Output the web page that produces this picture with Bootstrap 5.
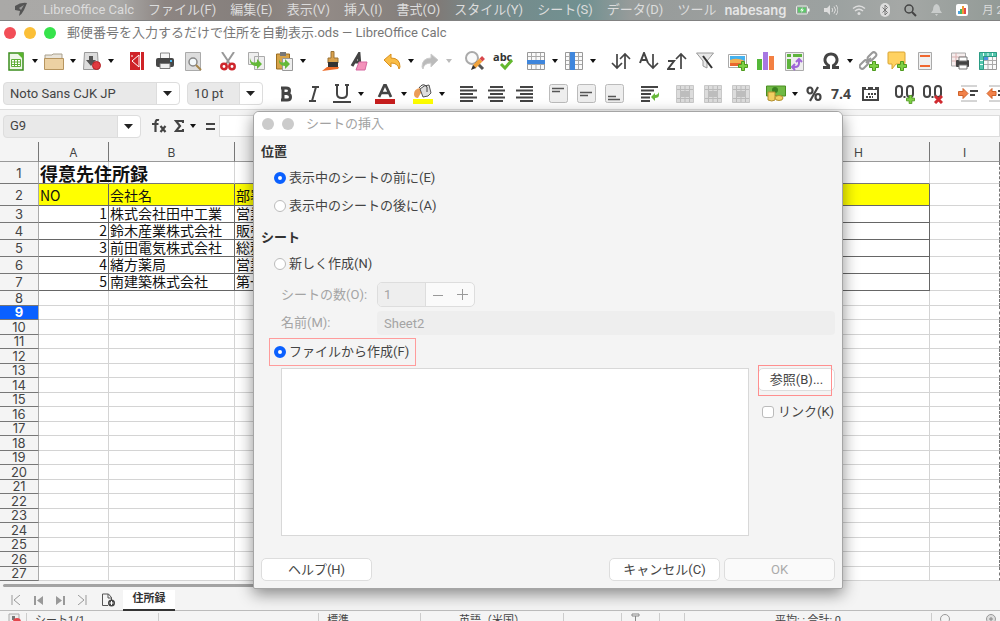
<!DOCTYPE html>
<html lang="ja">
<head>
<meta charset="utf-8">
<meta name="viewport" content="width=device-width, initial-scale=1">
<title>郵便番号を入力するだけで住所を自動表示.ods — LibreOffice Calc</title>
<link href="https://cdn.jsdelivr.net/npm/bootstrap@5.3.0/dist/css/bootstrap.min.css" rel="stylesheet">
<style>
body{font:13px/18px Roboto,"Noto Sans CJK JP",sans-serif;color:#444;background:#fff;height:100vh}
a{color:inherit;text-decoration:none}
button{border:0;background:none;padding:0;color:inherit}
svg{display:block;flex:none}
.menubar{height:21px;gap:14px;padding-left:13px;color:#dcdcdc;border-bottom:1px solid #818181;background:linear-gradient(90deg,#aaa9a7 0,#a9a8a6 120px,#8d8582 165px,#857f7c 250px,#938b87 320px,#7f7b78 440px,#76898a 480px,#719191 585px,#969b9a 630px,#9ea09f 760px,#9ba1a0 830px,#a5a8a6 900px,#939b97 100%)}
.menubar .user{font-family:Inter,sans-serif;font-weight:600;color:#e6e6e6;margin-left:-6px}
.tray{gap:14px;margin-left:-4px}
.titlebar{height:23px;color:#777;padding-left:4px}
.titlebar .doc{margin-left:11px}
.dot{width:12px;height:12px;border-radius:50%}
.tools{height:34px;padding-left:2px;overflow:hidden}
.tools.format{height:32px;padding-left:3px;border-bottom:1px solid #ddd}
.ic{width:28px;height:26px;flex:none;display:flex;align-items:center;justify-content:center}
.car{width:10px;height:26px;flex:none;display:flex;align-items:center;justify-content:center}
.car::after{content:"";border:3px solid transparent;border-top:4px solid #111;border-bottom:0}
.car.dim::after{border-top-color:#bbb}
.s5{width:5px;flex:none}.s7{width:7px;flex:none}.s9{width:9px;flex:none}
.combo{appearance:none;height:23px;border:1px solid #ddd;border-radius:4px;color:#444;padding:0 26px 0 6px;
background:url("data:image/svg+xml,%3Csvg xmlns='http://www.w3.org/2000/svg' width='23' height='21'%3E%3Cpath fill='%23fff' stroke='none' d='M1 0h22v21H1z'/%3E%3Cpath fill='%23ddd' d='M0 0h1v21H0z'/%3E%3Cpath fill='%23222' d='M7 8h9l-4.500 5z'/%3E%3C/svg%3E") right top no-repeat #e9e9e9}
.c-font{width:177px}.c-size{width:76px}.c-cell{width:138px;margin-left:3px}
.formula{height:32px;background:#f4f4f4;color:#444}
.formula .line{height:22px;border:1px solid #ddd;background:#fff;outline:0}
.sheet{min-height:0;background:#f4f4f4}
.grid{table-layout:fixed;width:1000px;border-collapse:separate;border-spacing:0;line-height:14px}
.grid th,.grid td{padding:0;overflow:hidden;white-space:nowrap}
.grid th{font-weight:400;font-family:Inter,sans-serif;text-align:center;background:#f4f4f4;color:#444}
.grid thead th{height:20px;line-height:17px;padding-top:2px;font-size:12px;border-bottom:1px solid #999;border-right:1px solid #777}
.grid tbody th{border-right:1px solid #aaa;border-bottom:1px solid #777}
.grid td{background:#fff;border-right:1px solid #d4d4d4;border-bottom:1px solid #d4d4d4;color:#111;font:14px/14px "Noto Sans CJK JP",sans-serif;padding:0 1px}
.grid tr>td:last-child{border-right:1px dashed #777}
.grid tbody tr{height:15px}
.grid tbody tr.even{height:14px}
.grid tbody tr.even th{line-height:13px}
.grid tbody tr.r1{height:22px}.grid tbody tr.r2{height:22px}
.grid tr.r1 td{font-size:18px;line-height:20px;font-weight:700;overflow:visible;border-bottom-color:#777}
.grid tr.r1 td:last-child{border-bottom-color:#d4d4d4}
.grid tr.rec{height:17px}
.grid tr.rec th{line-height:16px}
.grid tr.rec td{line-height:14px;vertical-align:top}
.grid tr.r2 td,.grid tr.rec td{border-bottom-color:#666;border-right-color:#666}
.grid tr.r2 td{background:#ff0}
.grid tr.r2 td:last-child,.grid tr.rec td:last-child{background:#fff;border-bottom-color:#d4d4d4;border-right-color:#777}
.grid tbody th.cur{background:#0a60ff;color:#fff;font-weight:700}
.tabs{height:30px;background:#f4f4f4;border-bottom:1px solid #bbb;padding:3px 3px 0}
.thumb{height:3px;width:60%;background:#a3a3a3;border-radius:2px}
.tabs nav{height:22px;margin-top:2px;padding-left:2px}
.tabs button{width:22px;display:flex;justify-content:center}
.tabs .addtab{width:30px}
.sheettab{width:52px;height:21px;background:#fff;border-bottom:2px solid #333;font-size:11px;font-weight:600;text-align:center;color:#333}
.status{height:10px;flex:none;overflow:hidden;font-size:11px;line-height:20px;background:#f4f4f4}
.status>div{height:20px;border-right:1px solid #ccc;margin-top:2px;line-height:16px}
.dlg{left:253px;top:111px;width:590px;border:1px solid #a5a5a5;border-radius:6px 6px 2px 2px;background:#f4f4f4;box-shadow:0 5px 16px rgba(0,0,0,.45);z-index:5;overflow:hidden}
.dlg header{height:24px;background:#fff;color:#a2a2a2;padding-left:8px;gap:8px}
.dlg header .dot{background:#cbcbcb}
.dlg form{padding:7px 7px 7px}
.dlg h2{font-size:13px;line-height:18px;font-weight:600;margin:0 0 3px;color:#333}
.dlg h2.next{margin-top:9px}
.opt{height:28px;padding-left:13px;gap:3px}
.opt input,.chk input{appearance:none;width:12px;height:12px;border:1px solid #bbb;background:#fff;border-radius:50%;margin:0;flex:none}
.opt input:checked{border:4px solid #0a60ff}
.chk{margin-top:12px}
.chk input{border-radius:3px}
.red{border:1px solid #ff9c9c;margin:3px 0 2px 8px;padding:0 9px 0 4px;width:147px}
.fld{padding-left:20px;margin-top:4px;color:#a4a4a4}
.fld label{width:96px}
.spin{height:25px;border:1px solid #ddd;border-radius:5px;background:#fafafa;overflow:hidden}
.spin input{width:48px;border:0;border-right:1px solid #ddd;background:#eee;color:#a4a4a4;padding:0 6px}
.spin button{width:24px;height:23px;display:flex;justify-content:center;align-items:center}
.nm{height:24px;border:0;border-radius:4px;background:#eee;color:#a4a4a4;padding:0 7px}
.files{height:168px;margin-left:20px;border:1px solid #d8d8d8;background:#fff}
.pb{height:23px;width:111px;border:1px solid #ddd;border-radius:5px;background:#fff;color:#444;line-height:20px}
.pb:disabled{background:#fafafa;color:#aaa}
.foot{margin-top:22px}
.side{width:77px;margin-left:9px}
.mark-box{left:0;top:-3px;width:74px;height:31px;border:1px solid #ff8f8f;pointer-events:none}
</style>
</head>
<body class="d-flex flex-column overflow-hidden position-relative">
<svg width="0" height="0" class="position-absolute"><defs>
<symbol id="plus" viewBox="0 0 10 10"><path d="M3.500.5h3v3h3v3h-3v3h-3v-3h-3v-3h3z" fill="#7ed044" stroke="#4e9a1e"/></symbol>
<symbol id="cells" viewBox="0 0 18 18"><path fill="#fafafa" stroke="#999" d="M.5.5h17v17H.5z"/><path stroke="#aaa" d="M1 4.500h16M1 8.500h16M1 12.500h16M4.500 1v16M9 1v16M13.500 1v16"/></symbol>
<symbol id="merge" viewBox="0 0 18 18"><path fill="#dcdcdc" stroke="#c9c9c9" d="M.5.5h17v17H.5z"/><path stroke="#bbb" d="M1 4.500h16M1 13.500h16M4.500 1v16M9 1v16M13.500 1v16"/><path fill="#bdbdbd" d="M4 6h10v6H4z"/></symbol>
<symbol id="vbox" viewBox="0 0 20 20"><rect x=".5" y=".5" width="18" height="18" rx="2" fill="#eee" stroke="#bbb"/></symbol>
</defs></svg>

<nav class="menubar d-flex align-items-center text-nowrap flex-shrink-0 overflow-hidden" aria-label="メニューバー">
<svg width="16" height="16" viewBox="0 0 16 16"><path d="M2 4q6-4 12-3l-3 7q-2 4-5 6l1-5-5-1z" fill="#555"/><path d="M6 6l5-3-3 5z" fill="#999"/></svg>
<a href="#">LibreOffice Calc</a><a href="#">ファイル(F)</a><a href="#">編集(E)</a><a href="#">表示(V)</a><a href="#">挿入(I)</a><a href="#">書式(O)</a><a href="#">スタイル(Y)</a><a href="#">シート(S)</a><a href="#">データ(D)</a><a href="#">ツール</a>
<span class="user">nabesang</span>
<div class="tray d-flex align-items-center">
<svg width="14" height="12" viewBox="0 0 14 12"><rect x=".5" y="2" width="11" height="8" rx="1" fill="none" stroke="#e5eee5"/><path fill="#5fc66b" d="M2 3.500h8v5H2z"/><path fill="#fff" d="M7 3L4 6.500h2L5 9l3-3.500H6zM12 4.500h1.500v3H12z"/></svg>
<svg width="14" height="12" viewBox="0 0 14 12"><path fill="#ddd" d="M0 4h3l3-3v10L3 8H0z"/><path fill="none" stroke="#ddd" d="M8 4q1.500 2 0 4M10 2.500q3 3.500 0 7M12 1q4 5 0 10"/></svg>
<svg width="14" height="12" viewBox="0 0 14 12"><path fill="none" stroke="#ddd" stroke-width="1.500" d="M1 4.500q6-5 12 0M3 7q4-3.500 8 0"/><circle cx="7" cy="9.500" r="1.500" fill="#ddd"/></svg>
<svg width="10" height="14" viewBox="0 0 10 14" class="ms-n1"><rect width="10" height="14" rx="5" fill="#ddd"/><path fill="none" stroke="#777" d="M2.500 4.500l5 5L5 12V2l2.500 2.500-5 5"/></svg>
<svg width="13" height="13" viewBox="0 0 13 13"><circle cx="5" cy="5" r="4" fill="none" stroke="#444" stroke-width="1.500"/><path stroke="#444" stroke-width="2" d="M8 8l4 4"/></svg>
<svg width="11" height="12" viewBox="0 0 11 12"><path fill="#c9cccb" d="M5.500 0Q9 1 9 6l2 3H0l2-3Q2 1 5.500 0zM4 10h3L5.500 12z"/></svg>
<svg width="12" height="12" viewBox="0 0 12 12"><rect width="12" height="12" rx="2" fill="#fff"/><path fill="#4aa3df" d="M2 7h2v3H2z"/><path fill="#4bb85c" d="M4 5h2v5H4z"/><path fill="#f09a36" d="M6 2h2v8H6z"/><path fill="#e5474b" d="M8 4h2v6H8z"/></svg>
<small>月 2月</small>
</div>
</nav>

<div class="titlebar d-flex align-items-center flex-shrink-0 text-nowrap">
<span class="dot" style="background:#f24e57"></span><span class="dot ms-2" style="background:#fbbf37"></span><span class="dot ms-2" style="background:#36e34b"></span>
<span class="doc">郵便番号を入力するだけで住所を自動表示.ods — LibreOffice Calc</span>
</div>

<div class="tools d-flex align-items-center flex-shrink-0" role="toolbar" aria-label="標準">
<button class="ic" aria-label="新規"><svg width="16" height="19" viewBox="0 0 16 19"><path fill="#eef7e8" stroke="#3b8d1e" stroke-width="1.500" d="M1 1h14v17H1z"/><path fill="#59b32c" d="M9 1h6v6z"/><path fill="#fff" stroke="#5fae38" d="M3.500 7.500h9v7h-9zM4 10h8M4 12.500h8M6.500 8v6M9.500 8v6"/></svg></button><button class="car" aria-label="新規の種類"></button>
<button class="ic" aria-label="開く"><svg width="20" height="17" viewBox="0 0 20 17"><path fill="#e9e4da" stroke="#aaa08c" d="M1 6V2h7l1-1h9v6"/><path fill="#ecd1a3" stroke="#b7955f" d="M.5 5.500h19v11H.5z"/></svg></button><button class="car" aria-label="最近のファイル"></button>
<button class="ic" aria-label="保存"><svg width="19" height="19" viewBox="0 0 19 19"><path fill="#ddd" stroke="#999" d="M1.500.5h13l1 17H.5z"/><path fill="#555" d="M6 4h4v4h3l-5 6-5-6h3z"/><circle cx="13.500" cy="13.500" r="4" fill="#e03b40" stroke="#b42025"/></svg></button><button class="car" aria-label="保存の種類"></button><i class="s7"></i>
<button class="ic" aria-label="PDF"><svg width="15" height="18" viewBox="0 0 15 18"><path fill="#cf2328" d="M0 0h14v18H0z"/><path stroke="#fff" fill="none" d="M10.500 0v18M2 9l7-6v12zM2 3v2"/></svg></button>
<button class="ic" aria-label="印刷"><svg width="18" height="18" viewBox="0 0 18 18"><path fill="#f7f7f7" stroke="#888" d="M4.500 1h9v7h-9z"/><rect y="6" width="18" height="9" rx="2" fill="#464646"/><path fill="#eee" stroke="#777" d="M4 11.500h10v5H4z"/><path fill="#4db7ef" d="M14 8h2v2h-2z"/></svg></button>
<button class="ic" aria-label="プレビュー"><svg width="17" height="19" viewBox="0 0 17 19"><path fill="#ddd" stroke="#aaa" d="M.5.5h15v18H.5z"/><circle cx="8" cy="10" r="4" fill="#f4f9fb" stroke="#888" stroke-width="1.500"/><path stroke="#a5854a" stroke-width="2" d="M11 13l5 5"/></svg></button><i class="s7"></i>
<button class="ic" aria-label="切り取り"><svg width="16" height="19" viewBox="0 0 16 19"><path stroke="#999" stroke-width="2" d="M2 0l8 12M14 0L6 12"/><g fill="#fff" stroke="#ce262c" stroke-width="2.500"><circle cx="4" cy="14.500" r="2.700"/><circle cx="12" cy="14.500" r="2.700"/></g></svg></button>
<button class="ic" aria-label="コピー"><svg width="17" height="18" viewBox="0 0 17 18"><path fill="#eee" stroke="#aaa" d="M.5.5h10v12H.5zM6.500 4.500h10v13h-10z"/><path fill="#64b939" d="M2 6q1 6 7 4V7l5 5-5 5v-3Q1 14 2 6z"/></svg></button>
<button class="ic" aria-label="貼り付け"><svg width="17" height="19" viewBox="0 0 17 19"><path fill="#d7a348" stroke="#9b6d20" d="M.5 2h13v15H.5z"/><path fill="#777" d="M4 0h6v4H4z"/><path fill="#eee" stroke="#999" d="M6.500 6.500h10v12h-10z"/><path fill="#64b939" d="M3 7q1 5 6 3V7l5 5-5 5v-3Q2 14 3 7z"/></svg></button><button class="car" aria-label="貼り付けの種類"></button><i class="s9"></i>
<button class="ic" aria-label="書式のコピー"><svg width="19" height="20" viewBox="0 0 19 20"><path fill="#d9a14c" stroke="#9b7335" d="M9 .5h3V7h4v5H6V7h3z"/><path fill="#333" d="M6 11h10v5H6z"/><path fill="#ee6b28" d="M5 16h12l-1 2-16 2z"/></svg></button>
<button class="ic" aria-label="書式クリア"><svg width="18" height="19" viewBox="0 0 18 19"><path fill="none" stroke="#444" stroke-width="3" d="M2 14L9 2l1 12M5 10h5"/><path fill="#f492bb" stroke="#d666a0" d="M9 10h8l-2 8H6z"/></svg></button><i class="s5"></i>
<button class="ic" aria-label="元に戻す"><svg width="18" height="17" viewBox="0 0 18 17"><path fill="#f9bd46" stroke="#d9901d" d="M1 7l7-6v4q9 0 9 9l-1 2q-1-6-8-6v4z"/></svg></button><button class="car" aria-label="履歴"></button>
<button class="ic" aria-label="やり直し"><svg width="18" height="17" viewBox="0 0 18 17"><path fill="#bbb" stroke="#ccc" d="M17 7l-7-6v4Q1 5 1 14l1 2q1-6 8-6v4z"/></svg></button><button class="car dim" aria-label="やり直しの履歴"></button><i class="s7"></i>
<button class="ic" aria-label="検索と置換"><svg width="20" height="20" viewBox="0 0 20 20"><circle cx="7" cy="7" r="6" fill="#fafafa" stroke="#aaa" stroke-width="2"/><path stroke="#555" stroke-width="3" d="M11 11l7 7"/><path stroke="#f0a23c" stroke-width="4" d="M16 9l-7 7"/><path stroke="#d8474c" stroke-width="4" d="M18.500 6.500L16 9"/><path fill="#333" d="M6 19l2-5 3 3z"/></svg></button>
<button class="ic" aria-label="スペルチェック"><svg width="20" height="20" viewBox="0 0 20 20"><text x="0" y="10" font-size="11" font-weight="700" fill="#333" font-family="Open Sans">abc</text><path fill="none" stroke="#63b82e" stroke-width="3" d="M8 13l4 4 7-8"/></svg></button><i class="s5"></i>
<button class="ic" aria-label="行"><svg width="18" height="18"><use href="#cells"/><path fill="#3f86dc" d="M0 8h18v4H0z"/></svg></button><button class="car" aria-label="行メニュー"></button>
<button class="ic" aria-label="列"><svg width="18" height="18"><use href="#cells"/><path fill="#3f86dc" d="M5 0h5v18H5z"/></svg></button><button class="car" aria-label="列メニュー"></button><i class="s9"></i>
<button class="ic" aria-label="並べ替え"><svg width="20" height="18" viewBox="0 0 20 18" fill="none" stroke="#444" stroke-width="1.700"><path d="M6 2v14M1 11l5 5 5-5M14 17V2M9 7l5-5 5 5"/></svg></button>
<button class="ic" aria-label="昇順"><svg width="20" height="18" viewBox="0 0 20 18" fill="none" stroke="#444" stroke-width="1.700"><path stroke-width="2" d="M1 11L5 1l4 10M3 8h5"/><path d="M14 2v14M9 11l5 5 5-5"/></svg></button>
<button class="ic" aria-label="降順"><svg width="20" height="18" viewBox="0 0 20 18" fill="none" stroke="#444" stroke-width="1.700"><path stroke-width="2" d="M1 9h6l-6 8h7"/><path d="M14 17V2M9 7l5-5 5 5"/></svg></button>
<button class="ic" aria-label="フィルター"><svg width="18" height="18" viewBox="0 0 18 18"><path fill="#e8e8e8" stroke="#999" d="M.5 1h17L11 9v7l-4-2V9z"/><path stroke="#333" stroke-width="2" d="M7 4l9 12"/></svg></button><i class="s5"></i>
<button class="ic" aria-label="画像"><svg width="20" height="19" viewBox="0 0 20 19"><path fill="#fff" stroke="#aaa" d="M.5 2.500h18v13H.5z"/><path fill="#45b2ef" d="M2 4h15v5H2z"/><path fill="#f3b152" d="M2 8q7-3 15 1v5H2z"/><path fill="#e9662e" d="M2 11h15v3H2z"/><use href="#plus" x="10" y="9" width="10" height="10"/></svg></button>
<button class="ic" aria-label="グラフ"><svg width="18" height="18" viewBox="0 0 18 18"><path fill="#55b83a" d="M0 7h5v11H0z"/><path fill="#a778e2" d="M6 0h5v18H6z"/><path fill="#f38042" d="M12 4h5v14h-5z"/></svg></button>
<button class="ic" aria-label="ピボットテーブル"><svg width="19" height="19" viewBox="0 0 19 19"><path fill="#eee" stroke="#aaa" d="M.5.5h18v18H.5z"/><path fill="#5eb43d" d="M2 2h4v3H2zM8 2h9v3H8zM2 7h4v10H2z"/><path fill="none" stroke="#a067d8" stroke-width="2" d="M7 15h3q4 0 4-4V7M10 12l-3 3 3 3M11 10l3-3 3 3"/></svg></button><i class="s9"></i>
<button class="ic" aria-label="特殊文字"><svg width="18" height="18" viewBox="0 0 18 18"><path fill="none" stroke="#444" stroke-width="3" d="M1 15.500h5.500v-2Q2.500 11 3 7q1-5 6-5t6 5q.5 4-3.500 6.500v2H17"/></svg></button><button class="car" aria-label="特殊文字一覧"></button>
<button class="ic" aria-label="リンク"><svg width="20" height="20" viewBox="0 0 20 20"><g fill="none" stroke="#999" stroke-width="2"><rect x="8" y="3" width="10" height="5" rx="2.500" transform="rotate(-45 13 5.500)"/><rect x="0" y="11" width="10" height="5" rx="2.500" transform="rotate(-45 5 13.500)"/><path d="M7 12l5-5"/></g><use href="#plus" x="10" y="10" width="10" height="10"/></svg></button>
<button class="ic" aria-label="コメント"><svg width="20" height="20" viewBox="0 0 20 20"><path fill="#ffd261" stroke="#d9a432" d="M2 1h15q1 0 1 1v10q0 1-1 1H9l-4 5v-5H2q-1 0-1-1V2q0-1 1-1z"/><use href="#plus" x="10" y="10" width="10" height="10"/></svg></button>
<button class="ic" aria-label="ヘッダーとフッター"><svg width="14" height="18" viewBox="0 0 14 18"><path fill="#f0f0f0" stroke="#aaa" d="M.5.5h13v17H.5z"/><path fill="#f0672f" d="M2 3h10v2H2zM2 13h10v2H2z"/></svg></button><i class="s7"></i>
<button class="ic" aria-label="印刷範囲"><svg width="18" height="18" viewBox="0 0 18 18"><path fill="#f6eeee" stroke="#aaa" d="M.5 1h14v13H.5z"/><path stroke="#dab0b0" d="M1 5h13M1 9h13M5 1v13"/><rect x="5" y="8" width="13" height="7" rx="1" fill="#444"/><path fill="#fff" stroke="#777" d="M8 5h8v4H8zM8 13h8v4H8z"/></svg></button>
<button class="ic" aria-label="固定"><svg width="18" height="18" viewBox="0 0 18 18"><use href="#cells"/><path fill="#55c5ad" stroke="#2a9c84" d="M.5.5h17v4h-13v13h-4z"/><path stroke="#e8fff9" d="M4.500 1v3M9 1v3M13.500 1v3M1 8.500h3M1 12.500h3"/><path fill="#4d90e0" d="M5 5h4v3H5z"/></svg></button>
</div>

<div class="tools format d-flex align-items-center flex-shrink-0" role="toolbar" aria-label="書式">
<select class="combo c-font flex-shrink-0" aria-label="フォント名"><option>Noto Sans CJK JP</option></select><i class="s7"></i>
<select class="combo c-size flex-shrink-0" aria-label="フォントサイズ"><option>10 pt</option></select><i class="s9"></i>
<button class="ic" aria-label="太字"><svg width="12" height="16" viewBox="0 0 12 16"><path fill="none" stroke="#444" stroke-width="3" d="M1 2h5q3.500 0 3.500 2.700T6 7.500H3M3 2v12M1 14h6q3.500 0 3.500-3T7 7.500"/></svg></button>
<button class="ic" aria-label="斜体"><svg width="10" height="16" viewBox="0 0 10 16"><path fill="none" stroke="#444" stroke-width="2" d="M3 1h7M0 15h7M7 1L3 15"/></svg></button>
<button class="ic" aria-label="下線"><svg width="18" height="19" viewBox="0 0 18 19"><path fill="none" stroke="#444" stroke-width="2" d="M4 1v9q0 4 5 4t5-4V1M2 1h4M12 1h4M0 18h18"/></svg></button><button class="car" aria-label="下線の種類"></button><i class="s5"></i>
<button class="ic" aria-label="文字の色"><svg width="20" height="20" viewBox="0 0 20 20"><path fill="none" stroke="#444" stroke-width="2.700" d="M4 13L9.500 1h1L16 13M6 9h8"/><path fill="#c81e1e" d="M0 15h20v5H0z"/></svg></button><button class="car" aria-label="文字の色一覧"></button>
<button class="ic" aria-label="背景色"><svg width="20" height="20" viewBox="0 0 20 20"><path fill="#eb9d58" d="M1 10q0-5 6-6l2 3-4 7q-4 0-4-4z"/><path fill="#ddd" stroke="#555" d="M7 5q4-4 9-4l2 8q-2 4-8 4z"/><path fill="none" stroke="#444" d="M6 4q4-6 8-1v5"/><path fill="#ff0" d="M0 15h20v5H0z"/></svg></button><button class="car" aria-label="背景色一覧"></button><i class="s7"></i>
<button class="ic" aria-label="左揃え"><svg width="17" height="16" viewBox="0 0 17 16"><path stroke="#444" stroke-width="2" d="M0 1h13M0 4.500h17M0 8h13M0 11.500h17M0 15h13"/></svg></button>
<button class="ic" aria-label="中央揃え"><svg width="17" height="16" viewBox="0 0 17 16"><path stroke="#444" stroke-width="2" d="M2 1h13M0 4.500h17M2 8h13M0 11.500h17M2 15h13"/></svg></button>
<button class="ic" aria-label="右揃え"><svg width="17" height="16" viewBox="0 0 17 16"><path stroke="#444" stroke-width="2" d="M4 1h13M0 4.500h17M4 8h13M0 11.500h17M4 15h13"/></svg></button><i class="s7"></i>
<button class="ic" aria-label="上揃え"><svg width="20" height="20"><use href="#vbox"/><path stroke="#555" stroke-width="1.500" d="M3 4.500h12M3 7.500h8"/></svg></button>
<button class="ic" aria-label="上下中央"><svg width="20" height="20"><use href="#vbox"/><path stroke="#555" stroke-width="1.500" d="M3 8.500h12M3 11.500h8"/></svg></button>
<button class="ic" aria-label="下揃え"><svg width="20" height="20"><use href="#vbox"/><path stroke="#555" stroke-width="1.500" d="M3 12.500h8M3 15.500h12"/></svg></button><i class="s7"></i>
<button class="ic" aria-label="折り返し"><svg width="19" height="16" viewBox="0 0 19 16"><path stroke="#444" stroke-width="2" d="M0 1h17M0 4.500h13M0 8h10M0 11.500h9M0 15h9"/><path fill="#67b83a" d="M18 6v3q0 3-4 3v3l-4-4 4-4v2q3 0 4-3z"/></svg></button><i class="s7"></i>
<button class="ic" aria-label="セルの結合と中央揃え"><svg width="18" height="18"><use href="#merge"/></svg></button>
<button class="ic" aria-label="セルの結合"><svg width="18" height="18"><use href="#merge"/></svg></button>
<button class="ic" aria-label="セルの分割"><svg width="18" height="18"><use href="#merge"/></svg></button><i class="s7"></i>
<button class="ic" aria-label="通貨"><svg width="20" height="17" viewBox="0 0 20 17"><path fill="#70b944" stroke="#4a8f22" d="M.5 1h19v10H.5z"/><circle cx="9" cy="5" r="3" fill="#3b8021"/><path fill="#f1cf62" stroke="#b3902e" d="M2 7h7v8q-3 2-7 0z"/><ellipse cx="13" cy="13" rx="4" ry="2.500" fill="#f1cf62" stroke="#b3902e"/></svg></button><button class="car" aria-label="通貨一覧"></button>
<button class="ic" aria-label="パーセント"><svg width="16" height="16" viewBox="0 0 16 16" fill="none" stroke="#444" stroke-width="2.200"><ellipse cx="4" cy="4.500" rx="2.500" ry="3"/><ellipse cx="12" cy="11" rx="2.500" ry="3"/><path d="M12 1L4 15"/></svg></button>
<button class="ic" aria-label="数値"><svg width="22" height="18" viewBox="0 0 22 18"><text x="0" y="14" font-size="14" font-weight="700" fill="#444" font-family="Open Sans">7.4</text></svg></button>
<button class="ic" aria-label="日付"><svg width="17" height="15" viewBox="0 0 17 15"><path fill="none" stroke="#444" stroke-width="2" d="M1 2h15v12H1z"/><path fill="#444" d="M1 1h15v3H1z"/><path stroke="#444" stroke-width="2" stroke-dasharray="2 1" d="M6 8h8M4 11h7"/><path stroke="#fff" stroke-width="2" d="M5 0v3M12 0v3"/></svg></button><i class="s7"></i>
<button class="ic" aria-label="小数点以下の桁数を増やす"><svg width="20" height="20" viewBox="0 0 20 20"><g fill="none" stroke="#444" stroke-width="2"><rect x="1" y="2" width="6" height="11" rx="3"/><rect x="12" y="2" width="6" height="11" rx="3"/></g><path fill="#444" d="M8.500 12h2v2h-2z"/><use href="#plus" x="11" y="11" width="9" height="9"/></svg></button>
<button class="ic" aria-label="小数点以下の桁数を減らす"><svg width="20" height="20" viewBox="0 0 20 20"><g fill="none" stroke="#444" stroke-width="2"><rect x="1" y="2" width="6" height="11" rx="3"/><rect x="12" y="2" width="6" height="11" rx="3"/></g><path fill="#444" d="M8.500 12h2v2h-2z"/><path stroke="#d02a30" stroke-width="3" d="M12 12l7 7M19 12l-7 7"/></svg></button><i class="s7"></i>
<button class="ic" aria-label="インデントを増やす"><svg width="20" height="17" viewBox="0 0 20 17"><path fill="#f2824a" stroke="#cf6128" d="M.5 6.500H5v-3L10 8.500l-5 5v-3H.5z"/><path stroke="#aaa" d="M3 1h16M3 16h16"/><path stroke="#444" stroke-width="2" d="M12 6h8M12 10h5"/></svg></button>
<button class="ic" aria-label="インデントを減らす"><svg width="20" height="17" viewBox="0 0 20 17"><path fill="#f2824a" stroke="#cf6128" d="M10 6.500H6v-3L1 8.500l5 5v-3h4z"/><path stroke="#aaa" d="M3 1h16M3 16h16"/><path stroke="#444" stroke-width="2" d="M12 6h8M12 10h5"/></svg></button>
</div>

<div class="formula d-flex align-items-center flex-shrink-0">
<select class="combo c-cell" aria-label="セル番地"><option>G9</option></select><i class="s5"></i>
<button class="ic" aria-label="関数ウィザード"><svg width="16" height="14" viewBox="0 0 16 14"><path fill="none" stroke="#444" stroke-width="2.200" d="M7 1Q3.500 0 3.500 4v9M0 5h6.500M8.500 7l5 6M13.500 7l-5 6"/></svg></button>
<button class="me-1" aria-label="合計"><svg width="10" height="12" viewBox="0 0 10 12"><path fill="none" stroke="#444" stroke-width="2.200" d="M9 3V1H2l4 5-4 5h7V9"/></svg></button>
<button class="car" aria-label="関数の選択"></button>
<button class="ms-2 me-1" aria-label="数式"><svg width="9" height="7"><path fill="#444" d="M0 0h9v2H0zM0 5h9v2H0z"/></svg></button>
<input class="line flex-fill" aria-label="入力行">
</div>

<main class="sheet flex-fill overflow-hidden">
<table class="grid">
<colgroup><col style="width:39px"><col style="width:70px"><col style="width:126px"><col style="width:111px"><col style="width:110px"><col style="width:111px"><col style="width:110px"><col style="width:111px"><col style="width:142px"><col style="width:70px"></colgroup>
<thead><tr><th></th><th>A</th><th>B</th><th>C</th><th>D</th><th>E</th><th>F</th><th>G</th><th>H</th><th>I</th></tr></thead>
<tbody id="rows">
<tr class="r1"><th>1</th><td>得意先住所録</td><td></td><td></td><td></td><td></td><td></td><td></td><td></td><td></td></tr>
<tr class="r2"><th>2</th><td>NO</td><td>会社名</td><td>部署</td><td></td><td></td><td></td><td></td><td></td><td></td></tr>
<tr class="rec"><th>3</th><td class="text-end">1</td><td>株式会社田中工業</td><td>営業</td><td></td><td></td><td></td><td></td><td></td><td></td></tr>
<tr class="rec"><th>4</th><td class="text-end">2</td><td>鈴木産業株式会社</td><td>販売</td><td></td><td></td><td></td><td></td><td></td><td></td></tr>
<tr class="rec"><th>5</th><td class="text-end">3</td><td>前田電気株式会社</td><td>総務</td><td></td><td></td><td></td><td></td><td></td><td></td></tr>
<tr class="rec"><th>6</th><td class="text-end">4</td><td>緒方薬局</td><td>営業</td><td></td><td></td><td></td><td></td><td></td><td></td></tr>
<tr class="rec"><th>7</th><td class="text-end">5</td><td>南建築株式会社</td><td>第一</td><td></td><td></td><td></td><td></td><td></td><td></td></tr>
</tbody>
</table>
</main>

<footer class="tabs flex-shrink-0">
<div class="thumb"></div>
<nav class="d-flex align-items-center" aria-label="シート">
<button aria-label="最初"><svg width="10" height="10" fill="none" stroke="#999"><path d="M1 0v10M9 0L3 5l6 5"/></svg></button>
<button aria-label="前"><svg width="9" height="9" fill="#999"><path d="M0 0h2v9H0zM9 0v9L3 4.500z"/></svg></button>
<button aria-label="次"><svg width="9" height="9" fill="#999"><path d="M7 0h2v9H7zM0 0v9l6-4.500z"/></svg></button>
<button aria-label="最後"><svg width="10" height="10" fill="none" stroke="#999"><path d="M9 0v10M1 0l6 5-6 5"/></svg></button>
<button class="addtab" aria-label="シートの追加"><svg width="13" height="14" viewBox="0 0 13 14"><path fill="none" stroke="#555" d="M6 12.500H.5V1h6l3 3.500V7M6 1v4h4"/><circle cx="9.500" cy="10" r="3.500" fill="#444"/><path stroke="#fff" d="M7.500 10h4M9.500 8v4"/></svg></button>
<a href="#" class="sheettab">住所録</a>
</nav>
</footer>
<div class="status d-flex text-nowrap">
<div style="width:27px" class="ps-2"><svg width="13" height="14"><path fill="#eee" stroke="#aaa" d="M1 1h10v12H1z"/><path fill="#777" d="M4 3h3v4H4z"/><circle cx="9" cy="9" r="4" fill="#e2474c"/></svg></div>
<div style="width:132px" class="ps-2">シート1/1</div><div style="width:160px"></div><div style="width:102px" class="ps-2">標準</div><div style="width:143px" class="text-center">英語（米国）</div><div style="width:58px"></div>
<div style="width:38px" class="ps-2"><svg width="12" height="12"><path fill="none" stroke="#888" d="M2 1h7v2H2zM5.500 3v9"/></svg></div><div style="width:25px"></div>
<div class="flex-fill text-center">平均: ; 合計: 0</div>
<div class="d-flex justify-content-between ps-2 pe-1 border-0" style="width:68px"><svg width="10" height="12"><circle cx="5" cy="6" r="4.500" fill="none" stroke="#999"/></svg><svg width="10" height="12"><circle cx="5" cy="6" r="4.500" fill="#ddd" stroke="#999"/><path stroke="#888" d="M3 6h4M5 4v4"/></svg></div>
</div>

<section class="dlg position-absolute" role="dialog" aria-labelledby="dt">
<header class="d-flex align-items-center"><span class="dot"></span><span class="dot"></span><span id="dt" class="ps-1">シートの挿入</span></header>
<form>
<h2>位置</h2>
<div class="opt d-flex align-items-center"><input type="radio" name="pos" id="p1" checked><label for="p1">表示中のシートの前に(E)</label></div>
<div class="opt d-flex align-items-center"><input type="radio" name="pos" id="p2"><label for="p2">表示中のシートの後に(A)</label></div>
<h2 class="next">シート</h2>
<div class="opt d-flex align-items-center"><input type="radio" name="src" id="s1"><label for="s1">新しく作成(N)</label></div>
<div class="fld d-flex align-items-center"><label for="cnt">シートの数(O):</label><div class="spin d-flex"><input id="cnt" value="1" disabled>
<button type="button" disabled aria-label="減らす"><svg width="10" height="10"><path stroke="#999" d="M0 5.500h10"/></svg></button><button type="button" disabled aria-label="増やす"><svg width="11" height="11"><path stroke="#999" d="M0 5.500h11M5.500 0v11"/></svg></button></div></div>
<div class="fld d-flex align-items-center"><label for="nm">名前(M):</label><input id="nm" class="nm flex-fill" value="Sheet2" disabled></div>
<div class="opt red d-flex align-items-center"><input type="radio" name="src" id="s2" checked><label for="s2" class="text-nowrap">ファイルから作成(F)</label></div>
<div class="d-flex">
<div class="files flex-fill" role="listbox" aria-label="シート一覧"></div>
<div class="side flex-shrink-0"><div class="position-relative"><button type="button" class="pb w-100">参照(B)...</button><span class="mark-box position-absolute"></span></div>
<div class="chk d-flex align-items-center gap-1 ps-1"><input type="checkbox" id="lk"><label for="lk" class="text-nowrap">リンク(K)</label></div></div>
</div>
<div class="foot d-flex"><button type="button" class="pb">ヘルプ(H)</button><button type="button" class="pb ms-auto me-1">キャンセル(C)</button><button type="button" class="pb" disabled>OK</button></div>
</form>
</section>
<script src="https://cdn.jsdelivr.net/npm/bootstrap@5.3.0/dist/js/bootstrap.bundle.min.js"></script>
<script>
const rows = document.getElementById('rows');
for (let n = 8; n <= 27; n++) {
  const tr = rows.insertRow();
  if (n % 2) tr.className = 'even';
  tr.innerHTML = `<th${n === 9 ? ' class="cur"' : ''}>${n}</th>` + '<td></td>'.repeat(9);
}
</script>
</body>
</html>
